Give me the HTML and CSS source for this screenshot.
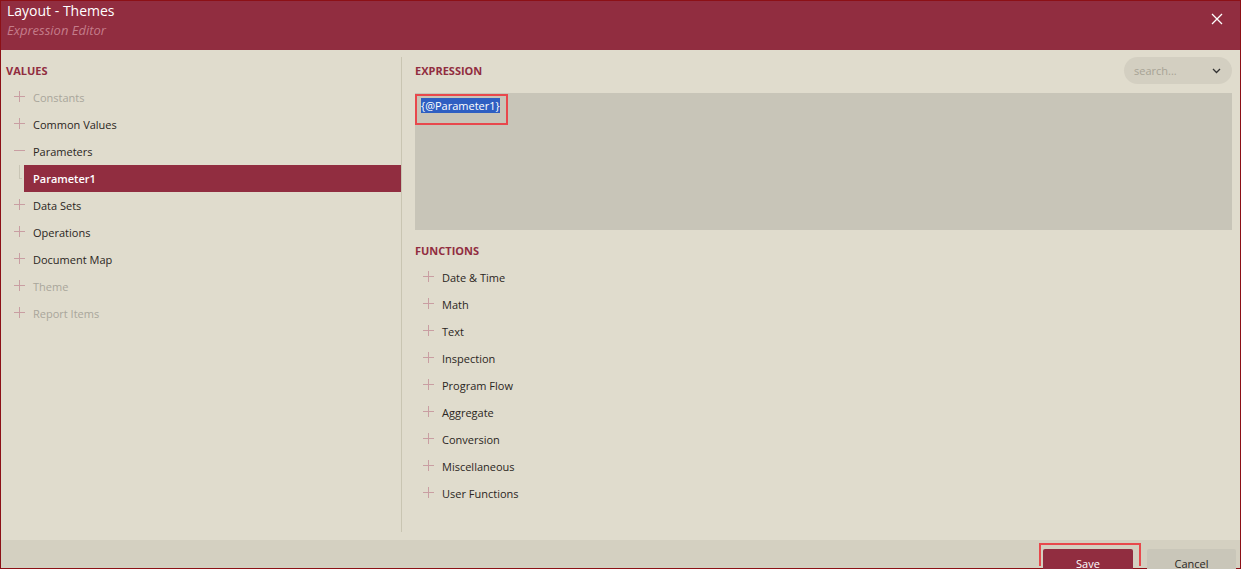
FILE: index.html
```html
<!DOCTYPE html>
<html lang="en">
<head>
    <meta charset="UTF-8">
    <title>Layout - Themes</title>
    <link rel="stylesheet" href="styles.css">
</head>
<body>
    <div class="dialog">
        <div class="header">
            <div class="title">Layout - Themes</div>
            <div class="subtitle">Expression Editor</div>
            <span class="close">
                <svg width="12" height="12" viewBox="0 0 12 12"><path d="M1 1L11 11M11 1L1 11" stroke="#fff" stroke-width="1.3"/></svg>
            </span>
        </div>
        <div class="content">
            <div class="values">
                <div class="heading">VALUES</div>
                <div class="item disabled"><span class="icon plus"></span>Constants</div>
                <div class="item"><span class="icon plus"></span>Common Values</div>
                <div class="item"><span class="icon minus"></span>Parameters</div>
                <div class="item child selected">Parameter1</div>
                <div class="item"><span class="icon plus"></span>Data Sets</div>
                <div class="item"><span class="icon plus"></span>Operations</div>
                <div class="item"><span class="icon plus"></span>Document Map</div>
                <div class="item disabled"><span class="icon plus"></span>Theme</div>
                <div class="item disabled"><span class="icon plus"></span>Report Items</div>
            </div>
            <div class="editor">
                <div class="heading-row">
                    <div class="heading">EXPRESSION</div>
                    <div class="search">
                        <span class="placeholder">search...</span>
                        <svg width="9" height="6" viewBox="0 0 9 6"><path d="M1 1L4.5 4.5L8 1" fill="none" stroke="#333" stroke-width="1.3"/></svg>
                    </div>
                </div>
                <div class="expression">
                    <span class="focus"><span class="sel">{@Parameter1}</span></span>
                </div>
                <div class="heading">FUNCTIONS</div>
                <div class="item"><span class="icon plus"></span>Date &amp; Time</div>
                <div class="item"><span class="icon plus"></span>Math</div>
                <div class="item"><span class="icon plus"></span>Text</div>
                <div class="item"><span class="icon plus"></span>Inspection</div>
                <div class="item"><span class="icon plus"></span>Program Flow</div>
                <div class="item"><span class="icon plus"></span>Aggregate</div>
                <div class="item"><span class="icon plus"></span>Conversion</div>
                <div class="item"><span class="icon plus"></span>Miscellaneous</div>
                <div class="item"><span class="icon plus"></span>User Functions</div>
            </div>
        </div>
        <div class="footer">
            <span class="save-focus"><button class="btn save">Save</button></span>
            <button class="btn cancel">Cancel</button>
        </div>
    </div>
</body>
</html>
```

FILE: styles.css
```css
html, body {
    margin: 0;
    height: 100%;
}
body {
    font-family: "Open Sans", "DejaVu Sans", sans-serif;
    font-size: 11px;
    color: #2b2622;
    overflow: hidden;
}
.dialog {
    height: 100vh;
    box-sizing: border-box;
    border: 1px solid #8c1016;
    display: flex;
    flex-direction: column;
    background-color: #e0dccd;
}
.header {
    position: relative;
    height: 49px;
    box-sizing: border-box;
    padding: 0 6px;
    background-color: #912d40;
}
.title {
    color: #fff;
    font-size: 14px;
    line-height: 20px;
}
.subtitle {
    color: #c47c8a;
    font-size: 13px;
    font-style: italic;
    line-height: 19px;
}
.close {
    position: absolute;
    right: 17px;
    top: 12px;
    display: flex;
}
.content {
    flex: 1;
    display: flex;
    padding: 7px 0 8px 0;
    min-height: 0;
}
.values {
    width: 395px;
    padding-left: 5px;
    border-right: 1px solid #c9c5b2;
}
.editor {
    flex: 1;
    padding: 0 8px 0 13px;
}
.heading {
    height: 27px;
    line-height: 27px;
    font-weight: bold;
    font-size: 11px;
    color: #912d40;
}
.heading-row {
    display: flex;
    justify-content: space-between;
    align-items: center;
}
.item {
    height: 27px;
    display: flex;
    align-items: center;
    font-size: 11px;
    color: #2b2622;
}
.item.disabled {
    color: #a9a69b;
}
.icon {
    position: relative;
    width: 27px;
    height: 27px;
    flex-shrink: 0;
}
.icon::before,
.icon::after {
    content: "";
    position: absolute;
    background-color: #c99ea2;
}
.icon::before {
    left: 8px;
    top: 12px;
    width: 11px;
    height: 1px;
}
.plus::after {
    left: 13px;
    top: 7px;
    width: 1px;
    height: 11px;
}
.item.child {
    position: relative;
    margin-left: 18px;
    padding-left: 9px;
}
.item.child::before {
    content: "";
    position: absolute;
    left: -5px;
    top: 0;
    width: 2px;
    height: 13px;
    border-left: 1px solid #c9c5b5;
    border-bottom: 1px solid #c9c5b5;
}
.selected {
    background-color: #912d40;
    color: #fff;
    font-weight: 600;
}
.search {
    width: 108px;
    height: 27px;
    box-sizing: border-box;
    border-radius: 14px;
    background-color: #d3cfc1;
    display: flex;
    align-items: center;
    justify-content: space-between;
    padding: 0 11px 0 10px;
}
.placeholder {
    color: #a7a395;
    font-size: 11px;
}
.expression {
    height: 137px;
    margin-top: 9px;
    margin-bottom: 7px;
    background-color: #c8c5b8;
    padding: 1px 0 0 0;
    box-sizing: border-box;
}
.focus {
    display: inline-block;
    border: 2px solid #e8484c;
    padding: 2px 6px 10px 4px;
}
.sel {
    background-color: #2e5fc2;
    color: #fff;
    font-size: 11px;
    line-height: 15px;
    display: inline-block;
}
.footer {
    height: 28px;
    background-color: #d4d0c1;
    display: flex;
    justify-content: flex-end;
    align-items: flex-start;
    padding: 3px 4px 0 0;
    box-sizing: border-box;
    gap: 6px;
}
.save-focus {
    display: inline-block;
    border: 2px solid #e8484c;
    border-bottom: none;
    padding: 4px 6px 0 2px;
    height: 23px;
    box-sizing: border-box;
}
.btn {
    font-family: "Open Sans", "DejaVu Sans", sans-serif;
    font-size: 11px;
    border: none;
    border-radius: 2px;
    height: 28px;
    padding: 0;
    margin: 0;
}
.save {
    width: 90px;
    background-color: #912d40;
    color: #fff;
}
.cancel {
    margin-top: 6px;
    width: 89px;
    background-color: #c9c6b9;
    color: #2b2622;
}
```
